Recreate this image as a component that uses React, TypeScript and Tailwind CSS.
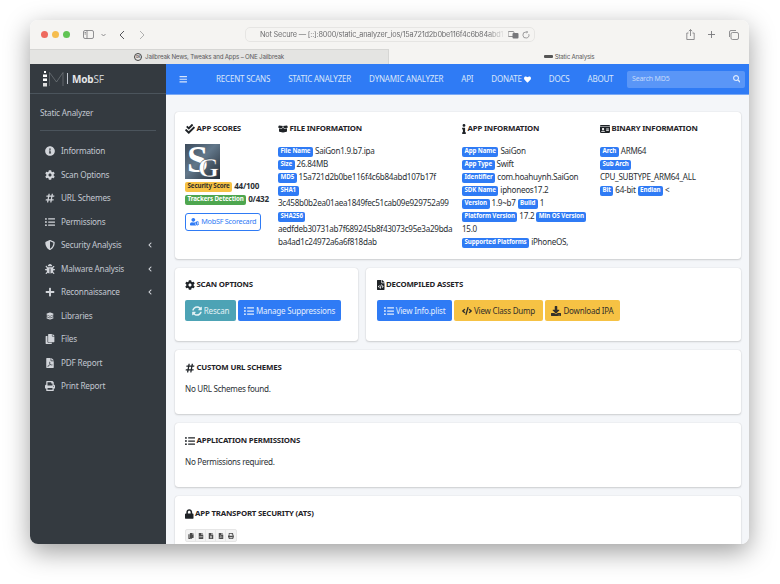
import type { ReactNode } from 'react'
import {
  FaBars, FaBoxOpen, FaBug, FaChevronLeft, FaCheckDouble, FaCode, FaCog, FaCopy, FaDownload, FaFileCode, FaFileCsv,
  FaFileExcel, FaFilePdf, FaHashtag, FaHeart, FaIdCard, FaInfo, FaInfoCircle, FaLayerGroup, FaListUl, FaLock, FaPlus,
  FaPrint, FaSearch, FaShieldAlt, FaSyncAlt, FaUserShield,
} from 'react-icons/fa'

const sideItems = [
  { label: 'Information', icon: <FaInfoCircle /> },
  { label: 'Scan Options', icon: <FaCog /> },
  { label: 'URL Schemes', icon: <FaHashtag /> },
  { label: 'Permissions', icon: <FaListUl /> },
  { label: 'Security Analysis', icon: <FaShieldAlt />, more: true },
  { label: 'Malware Analysis', icon: <FaBug />, more: true },
  { label: 'Reconnaissance', icon: <FaPlus />, more: true },
  { label: 'Libraries', icon: <FaLayerGroup className="scale-75" /> },
  { label: 'Files', icon: <FaCopy /> },
  { label: 'PDF Report', icon: <FaFilePdf /> },
  { label: 'Print Report', icon: <FaPrint /> },
]

const navItems = ['RECENT SCANS', 'STATIC ANALYZER', 'DYNAMIC ANALYZER', 'API']

function Badge({ children, className = 'bg-[#2f7bf5] text-white' }: { children: ReactNode; className?: string }) {
  return (
    <span className={`inline-flex h-[10px] items-center rounded-[2px] px-[2.5px] text-[6.2px] leading-none font-bold tracking-[-0.1px] whitespace-nowrap ${className}`}>
      {children}
    </span>
  )
}

function Row({ children }: { children: ReactNode }) {
  return <div className="flex h-[13px] items-center gap-[2px] whitespace-nowrap">{children}</div>
}

function Heading({ icon, children }: { icon: ReactNode; children: ReactNode }) {
  return (
    <div className="flex h-[12px] items-center gap-[1.5px] text-[7.85px] font-bold tracking-[-0.2px] whitespace-nowrap text-[#1f2327]">
      <span className="text-[10px]">{icon}</span>
      {children}
    </div>
  )
}

function Btn({ icon, children, className }: { icon: ReactNode; children: ReactNode; className: string }) {
  return (
    <div className={`flex h-[21px] items-center justify-center gap-[2px] rounded-[2px] text-[8px] whitespace-nowrap ${className}`}>
      <span className="text-[10px]">{icon}</span>
      {children}
    </div>
  )
}

function SafariBar() {
  return (
    <div className="flex h-[29px] items-center bg-[#f5f4f2] pl-[11px] text-[#77777a]">
      <div className="flex gap-[4px]">
        <span className="size-[7px] rounded-full bg-[#ee6a5f]" />
        <span className="size-[7px] rounded-full bg-[#f5bd4f]" />
        <span className="size-[7px] rounded-full bg-[#61c454]" />
      </div>
      <svg className="ml-[13px]" width="11" height="9" viewBox="0 0 11 9" fill="none" stroke="#77777a" strokeWidth="0.8">
        <rect x="0.5" y="0.5" width="10" height="8" rx="1.5" />
        <path d="M4 0.5v8" />
        <path d="M1.5 2.5h1.5M1.5 4h1.5" />
      </svg>
      <svg className="ml-[7px]" width="5" height="4" viewBox="0 0 5 4" fill="none" stroke="#77777a" strokeWidth="0.8">
        <path d="M0.5 1l2 2 2-2" />
      </svg>
      <svg className="ml-[13px]" width="6" height="10" viewBox="0 0 6 10" fill="none" stroke="#55555a" strokeWidth="1">
        <path d="M5 1L1 5l4 4" />
      </svg>
      <svg className="ml-[14px]" width="6" height="10" viewBox="0 0 6 10" fill="none" stroke="#b0b0b0" strokeWidth="1">
        <path d="M1 1l4 4-4 4" />
      </svg>
      <div className="ml-[100px] flex h-[15px] w-[290px] items-center justify-between rounded-[5px] border border-[#e6e5e3] pr-[4px] pl-[14px] text-[7.35px] font-['Inter',sans-serif] whitespace-nowrap">
        <span className="w-[246px] overflow-hidden text-[#6e6e70] [mask-image:linear-gradient(to_right,black_92%,transparent)]">Not Secure — [::]:8000/static_analyzer_ios/15a721d2b0be116f4c6b84abd1</span>
        <span className="flex items-center gap-[3px]">
          <svg width="11" height="8" viewBox="0 0 11 8"><rect x="0" y="0.5" width="6" height="5" rx="1" fill="none" stroke="#77777a" strokeWidth="0.8" /><rect x="4.5" y="2" width="6" height="5.5" rx="1" fill="#77777a" /></svg>
          <svg width="8" height="8" viewBox="0 0 8 8" fill="none" stroke="#77777a" strokeWidth="0.7"><path d="M6.8 3.2A3 3 0 1 1 4 1h1.5M4.4 0L5.6 1 4.4 2" /></svg>
        </span>
      </div>
      <div className="ml-auto flex items-center gap-[12px] pr-[10px]">
        <svg width="9" height="11" viewBox="0 0 9 11" fill="none" stroke="#77777a" strokeWidth="0.8"><path d="M2.5 4H.8v6.5h7.4V4H6.5M4.5 7V.6M2.8 2.2L4.5.6l1.7 1.6" /></svg>
        <svg width="9" height="9" viewBox="0 0 9 9" fill="none" stroke="#77777a" strokeWidth="0.9"><path d="M4.5 1v7M1 4.5h7" /></svg>
        <svg width="11" height="10" viewBox="0 0 11 10" fill="none" stroke="#77777a" strokeWidth="0.8"><rect x="3" y="2.5" width="7.5" height="7" rx="1.5" /><path d="M1.5 7V2A1.5 1.5 0 0 1 3 .5h5" /></svg>
      </div>
    </div>
  )
}

function TabBar() {
  return (
    <div className="flex h-[15px] text-[6.2px] font-['Inter',sans-serif] text-[#5a5a5c]">
      <div className="flex w-[359px] items-center justify-center gap-[3px] border-t border-r border-[#d6d6d4] bg-[#e4e4e2]">
        <span className="flex size-[8px] items-center justify-center rounded-full border border-[#444] text-[3px] font-bold">OK</span>
        Jailbreak News, Tweaks and Apps – ONE Jailbreak
      </div>
      <div className="flex flex-1 items-center justify-center gap-[2px] bg-[#f5f4f2]">
        <span className="h-[3px] w-[9px] rounded-[1px] bg-[#555]" />
        Static Analysis
      </div>
    </div>
  )
}

function Sidebar() {
  return (
    <aside className="flex w-[136px] shrink-0 flex-col bg-[#343a40] text-[#c2c7d0]">
      <div className="flex h-[30px] items-center border-b border-[#4b545c] pl-[13px]">
        <svg width="21" height="16" viewBox="0 0 21 16" fill="none">
          <rect x="1" y="0" width="2" height="2" fill="#fff" />
          <rect x="0" y="3.5" width="4" height="2.5" fill="#fff" />
          <rect x="0" y="7.5" width="4" height="2.5" fill="#fff" />
          <rect x="0" y="12" width="4" height="3.5" fill="#ddd" />
          <path d="M6.5 15V1.5L13.5 11l6.5-9.5V15" stroke="#8d9297" strokeWidth="0.5" />
        </svg>
        <span className="ml-[3px] h-[11px] w-px bg-[#c2c7d0]" />
        <span className="ml-[4px] text-[10px] leading-none text-[#c9ccd0]"><b className="font-bold text-[#e5e6e8]">Mob</b>SF</span>
      </div>
      <div className="mx-[10px] flex h-[37px] items-center border-b border-[#4b545c] pt-[2px] text-[8.2px]">Static Analyzer</div>
      <nav className="mt-[8.5px] flex flex-col">
        {sideItems.map(item => (
          <div key={item.label} className="flex h-[23.5px] items-center pr-[13px] pl-[15px] text-[8.2px]">
            <span className="flex w-[10px] justify-center text-[10px] text-[#d2d5da]">{item.icon}</span>
            <span className="ml-[6px]">{item.label}</span>
            {item.more && <FaChevronLeft className="ml-auto text-[6px] text-[#d2d5da]" />}
          </div>
        ))}
      </nav>
    </aside>
  )
}

function TopNav() {
  return (
    <div className="flex h-[31px] shrink-0 items-center border-b border-[#7aa9f5] bg-[#2f7bf5] text-[8px] text-[#d9e6fb]">
      <FaBars className="ml-[13px] text-[8.5px]" />
      <div className="ml-[28.5px] flex items-center gap-[18px] whitespace-nowrap">
        {navItems.map(n => <span key={n}>{n}</span>)}
        <span className="flex items-center gap-[2px]">DONATE <FaHeart className="text-[7px] text-white" /></span>
        <span>DOCS</span>
        <span>ABOUT</span>
      </div>
      <div className="mr-[4px] ml-auto flex h-[17px] w-[118px] items-center justify-between rounded-[2px] bg-[#5a96f7] px-[5px] text-[7px] text-[#c4d9fb]">
        Search MD5
        <FaSearch className="text-[7.5px] text-[#dce9fd]" />
      </div>
    </div>
  )
}

function Card({ className = '', children }: { className?: string; children: ReactNode }) {
  return <section className={`shrink-0 rounded-[3px] bg-white shadow-[0_0_1px_rgba(0,0,0,.2),0_1px_2px_rgba(0,0,0,.15)] ${className}`}>{children}</section>
}

function AppIcon() {
  return (
    <svg width="35" height="35" viewBox="0 0 35 35" className="block overflow-visible">
      <defs>
        <linearGradient id="sg-bg" x1="0" y1="0" x2="1" y2="1">
          <stop offset="0" stopColor="#3d4c5c" />
          <stop offset="0.45" stopColor="#62778a" />
          <stop offset="1" stopColor="#232c35" />
        </linearGradient>
      </defs>
      <rect width="35" height="35" fill="url(#sg-bg)" />
      <text x="2" y="28" fontFamily="'Liberation Serif', serif" fontSize="38" fontWeight="700" fill="#fff">S</text>
      <text x="13" y="33" fontFamily="'Liberation Serif', serif" fontSize="27" fontWeight="700" fill="#fff" stroke="#2a333c" strokeWidth="0.4">G</text>
    </svg>
  )
}

function TopCard() {
  return (
    <Card className="flex h-[147px] pt-[11px] pl-[10px] text-[8.1px] leading-none tracking-[-0.27px] text-[#2b3035]">
      <div className="w-[93px] shrink-0">
        <Heading icon={<FaCheckDouble />}>APP SCORES</Heading>
        <div className="mt-[9px]"><AppIcon /></div>
        <div className="mt-[1px] flex h-[13px] items-center gap-[2px]">
          <Badge className="bg-[#f6c244] text-[#33302a]">Security Score</Badge>
          <b className="font-bold">44/100</b>
        </div>
        <div className="flex h-[13px] items-center gap-[2px] whitespace-nowrap">
          <Badge className="bg-[#4ea64f] text-white">Trackers Detection</Badge>
          <b className="font-bold">0/432</b>
        </div>
        <div className="mt-[7px] flex h-[18px] w-[76px] items-center justify-center gap-[2px] rounded-[3px] border border-[#2f7bf5] text-[7.3px] whitespace-nowrap text-[#2f7bf5]">
          <FaUserShield className="text-[9.5px]" /> MobSF Scorecard
        </div>
      </div>
      <div className="w-[184px] shrink-0">
        <Heading icon={<FaBoxOpen />}>FILE INFORMATION</Heading>
        <div className="mt-[10px]">
          <Row><Badge>File Name</Badge> SaiGon1.9.b7.ipa</Row>
          <Row><Badge>Size</Badge> 26.84MB</Row>
          <Row><Badge>MD5</Badge> 15a721d2b0be116f4c6b84abd107b17f</Row>
          <Row><Badge>SHA1</Badge></Row>
          <Row>3c458b0b2ea01aea1849fec51cab09e929752a99</Row>
          <Row><Badge>SHA256</Badge></Row>
          <Row>aedfdeb30731ab7f689245b8f43073c95e3a29bda</Row>
          <Row>ba4ad1c24972a6a6f818dab</Row>
        </div>
      </div>
      <div className="w-[138px] shrink-0">
        <Heading icon={<FaInfo className="w-[4px]" />}>APP INFORMATION</Heading>
        <div className="mt-[10px]">
          <Row><Badge>App Name</Badge> SaiGon</Row>
          <Row><Badge>App Type</Badge> Swift</Row>
          <Row><Badge>Identifier</Badge> com.hoahuynh.SaiGon</Row>
          <Row><Badge>SDK Name</Badge> iphoneos17.2</Row>
          <Row><Badge>Version</Badge> 1.9~b7 <Badge>Build</Badge> 1</Row>
          <Row><Badge>Platform Version</Badge> 17.2 <Badge>Min OS Version</Badge></Row>
          <Row>15.0</Row>
          <Row><Badge>Supported Platforms</Badge> iPhoneOS,</Row>
        </div>
      </div>
      <div className="flex-1">
        <Heading icon={<FaIdCard />}>BINARY INFORMATION</Heading>
        <div className="mt-[10px]">
          <Row><Badge>Arch</Badge> ARM64</Row>
          <Row><Badge>Sub Arch</Badge></Row>
          <Row>CPU_SUBTYPE_ARM64_ALL</Row>
          <Row><Badge>Bit</Badge> 64-bit <Badge>Endian</Badge> &lt;</Row>
        </div>
      </div>
    </Card>
  )
}

function Section({ icon, title, text }: { icon: ReactNode; title: string; text: string }) {
  return (
    <Card className="h-[64px] pt-[11.5px] pl-[10px]">
      <Heading icon={icon}>{title}</Heading>
      <p className="mt-[10px] text-[8.1px] leading-[10px] tracking-[-0.27px] text-[#2b3035]">{text}</p>
    </Card>
  )
}

export default function App() {
  return (
    <div className="h-[584px] w-[780px] overflow-hidden bg-white pt-[20px] pl-[30px] font-['Noto_Sans',sans-serif] tracking-[-0.2px]">
      <div className="flex h-[524px] w-[719px] flex-col overflow-hidden rounded-[8px] shadow-[0_8px_26px_rgba(0,0,0,.38)]">
        <SafariBar />
        <TabBar />
        <div className="flex min-h-0 flex-1">
          <Sidebar />
          <div className="flex min-w-0 flex-1 flex-col bg-[#f4f6f9]">
            <TopNav />
            <main className="flex flex-col gap-[9px] overflow-hidden pt-[17px] pr-[8px] pl-[9px]">
              <TopCard />
              <div className="flex shrink-0 gap-[8px]">
                <Card className="h-[73px] w-[183px] pt-[11px] pl-[10px]">
                  <Heading icon={<FaCog />}>SCAN OPTIONS</Heading>
                  <div className="mt-[9px] flex gap-[2px]">
                    <Btn icon={<FaSyncAlt />} className="w-[51px] bg-[#4da3b5] text-[#e3f1f4]">Rescan</Btn>
                    <Btn icon={<FaListUl />} className="w-[103px] bg-[#2f7bf5] text-[#e3edfd]">Manage Suppressions</Btn>
                  </div>
                </Card>
                <Card className="h-[73px] flex-1 pt-[11px] pl-[11px]">
                  <Heading icon={<FaFileCode className="w-[7.5px]" />}>DECOMPILED ASSETS</Heading>
                  <div className="mt-[9px] flex gap-[2px]">
                    <Btn icon={<FaListUl />} className="w-[75px] bg-[#2f7bf5] text-[#e3edfd]">View Info.plist</Btn>
                    <Btn icon={<FaCode />} className="w-[89px] bg-[#f6c244] text-[#33302a]">View Class Dump</Btn>
                    <Btn icon={<FaDownload />} className="w-[75px] bg-[#f6c244] text-[#33302a]">Download IPA</Btn>
                  </div>
                </Card>
              </div>
              <Section icon={<FaHashtag />} title="CUSTOM URL SCHEMES" text="No URL Schemes found." />
              <Section icon={<FaListUl />} title="APPLICATION PERMISSIONS" text="No Permissions required." />
              <Card className="h-[70px] pt-[12px] pl-[10px]">
                <Heading icon={<FaLock className="w-[8.5px]" />}>APP TRANSPORT SECURITY (ATS)</Heading>
                <div className="mt-[9px] flex w-fit divide-x divide-[#e6e6e6] rounded-[2px] border border-[#e6e6e6] bg-[#f3f3f3] text-[6px] text-[#4a4a4a]">
                  <span className="flex h-[11px] w-[10px] items-center justify-center"><FaCopy /></span>
                  <span className="flex h-[11px] w-[10px] items-center justify-center"><FaFileCsv /></span>
                  <span className="flex h-[11px] w-[10px] items-center justify-center"><FaFileExcel /></span>
                  <span className="flex h-[11px] w-[10px] items-center justify-center"><FaFilePdf /></span>
                  <span className="flex h-[11px] w-[10px] items-center justify-center"><FaPrint /></span>
                </div>
              </Card>
            </main>
          </div>
        </div>
      </div>
    </div>
  )
}
